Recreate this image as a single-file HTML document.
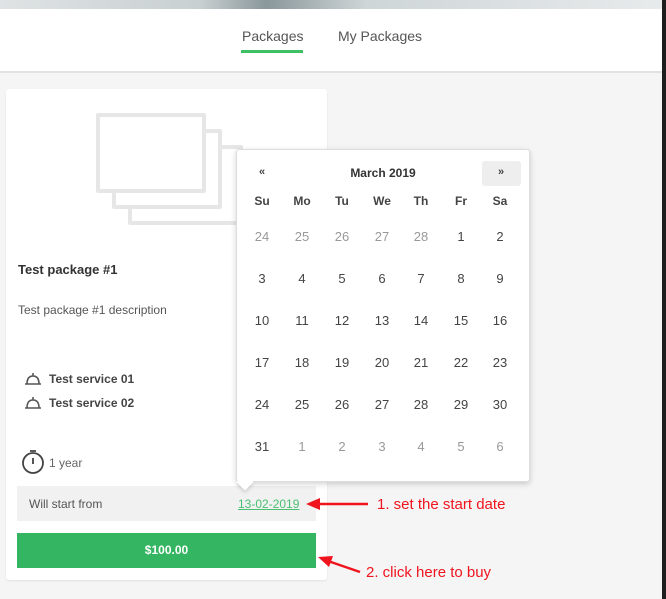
<!DOCTYPE html>
<html><head><style>
*{margin:0;padding:0;box-sizing:border-box}
body{width:666px;height:599px;overflow:hidden;background:#f5f5f5;font-family:"Liberation Sans",sans-serif;position:relative;color:#444}
.a{position:absolute}
.top{left:0;top:0;width:666px;height:9px;background:linear-gradient(90deg,#dfe3e4,#c9d0d2 30%,#8a979b 40%,#cfd6d8 55%,#e8ebec)}
.nav{left:0;top:9px;width:666px;height:64px;background:#fff;border-bottom:2px solid #e2e2e2}
.card{left:6px;top:89px;width:321px;height:491px;background:#fff;border-radius:3px;box-shadow:0 1px 2px rgba(0,0,0,.08)}
.ph{border:4px solid #e6e6e6;background:#fff;border-radius:2px}
.cal{left:236px;top:149px;width:294px;height:333px;background:#fff;border:1px solid #ddd;border-radius:3px;box-shadow:0 2px 6px rgba(0,0,0,.18)}
.c{position:absolute;width:40px;text-align:center;font-size:13px;color:#444}
.m{color:#999}
.b{font-weight:bold}
.red{color:#f0141e;font-size:15px}
</style></head><body>
<div class="a top"></div>
<div class="a nav">
<div class="a" style="left:242px;top:19px;font-size:14px;color:#555">Packages</div>
<div class="a" style="left:241px;top:41px;width:62px;height:3px;background:#3cc063"></div>
<div class="a" style="left:338px;top:19px;font-size:14px;color:#555">My Packages</div>
</div>
<div class="a" style="left:662px;top:0;width:4px;height:599px;background:#1e1e1e"></div>
<div class="a card"></div>
<div class="a ph" style="left:128px;top:145px;width:115px;height:80px"></div>
<div class="a ph" style="left:112px;top:129px;width:110px;height:80px"></div>
<div class="a ph" style="left:96px;top:113px;width:110px;height:80px"></div>
<div class="a b" style="left:18px;top:262px;font-size:13px;color:#333">Test package #1</div>
<div class="a" style="left:18px;top:303px;font-size:12px;color:#555">Test package #1 description</div>
<svg class="a" style="left:24px;top:371px" width="18" height="40" fill="none" stroke="#555" stroke-width="1.6"><path d="M3 13 Q3 5 9 5 Q15 5 15 13 Z M1 13 H17 M9 2 V5"/><path d="M3 37 Q3 29 9 29 Q15 29 15 37 Z M1 37 H17 M9 26 V29"/></svg>
<div class="a b" style="left:49px;top:372px;font-size:12px;color:#444">Test service 01</div>
<div class="a b" style="left:49px;top:396px;font-size:12px;color:#444">Test service 02</div>
<svg class="a" style="left:21px;top:449px" width="24" height="26" fill="none" stroke="#444" stroke-width="1.8"><circle cx="12" cy="14" r="10"/><path d="M12 9 V15 M9 2 H15"/></svg>
<div class="a" style="left:49px;top:456px;font-size:12px;color:#666">1 year</div>
<div class="a" style="left:17px;top:486px;width:299px;height:35px;background:#f1f1f1"></div>
<div class="a" style="left:29px;top:497px;font-size:12px;color:#555">Will start from</div>
<div class="a" style="left:238px;top:497px;font-size:12px;color:#4cbf72;text-decoration:underline">13-02-2019</div>
<div class="a b" style="left:17px;top:533px;width:299px;height:35px;background:#34b561;color:#fff;font-size:12px;text-align:center;line-height:35px">$100.00</div>
<div class="a cal"></div>
<div class="a" style="left:239px;top:476px;width:12px;height:12px;background:#fff;transform:rotate(45deg);box-shadow:2px 2px 3px rgba(0,0,0,.12)"></div>
<div class="a" style="left:482px;top:161px;width:39px;height:25px;background:#eee;border-radius:3px"></div>
<div class="a" style="left:236px;top:149px;width:294px;height:333px">
<div class="c b" style="left:6px;top:17px;font-size:11px">«</div>
<div class="a b" style="left:0;width:294px;top:17px;text-align:center;font-size:12px;color:#333">March 2019</div>
<div class="c b" style="left:245px;top:17px;font-size:11px">»</div>
</div>
<div id="g"></div>
<script>
var cols=[262,302,342,382,421,461,500],h='';
var dow=['Su','Mo','Tu','We','Th','Fr','Sa'];
dow.forEach(function(d,i){h+='<div class="c b" style="left:'+(cols[i]-20)+'px;top:194px;font-size:12px">'+d+'</div>'});
var days=[24,25,26,27,28,1,2];for(var d=3;d<=31;d++)days.push(d);days=days.concat([1,2,3,4,5,6]);
days.forEach(function(d,k){var r=Math.floor(k/7),c=k%7;var m=(k<5||k>=36);h+='<div class="c'+(m?' m':'')+'" style="left:'+(cols[c]-20)+'px;top:'+(229+r*42)+'px">'+d+'</div>'});
document.getElementById('g').innerHTML=h;
</script>
<svg class="a" style="left:300px;top:490px" width="80" height="90"><path d="M68 14 L16 14" stroke="#f0141e" stroke-width="2.5"/><path d="M6 14 L20 8 L20 20 Z" fill="#f0141e"/><path d="M60 82 L28 71" stroke="#f0141e" stroke-width="2.5"/><path d="M18 67 L33 66 L29 77 Z" fill="#f0141e"/></svg>
<div class="a red" style="left:377px;top:496px">1. set the start date</div>
<div class="a red" style="left:366px;top:564px">2. click here to buy</div>
</body></html>
